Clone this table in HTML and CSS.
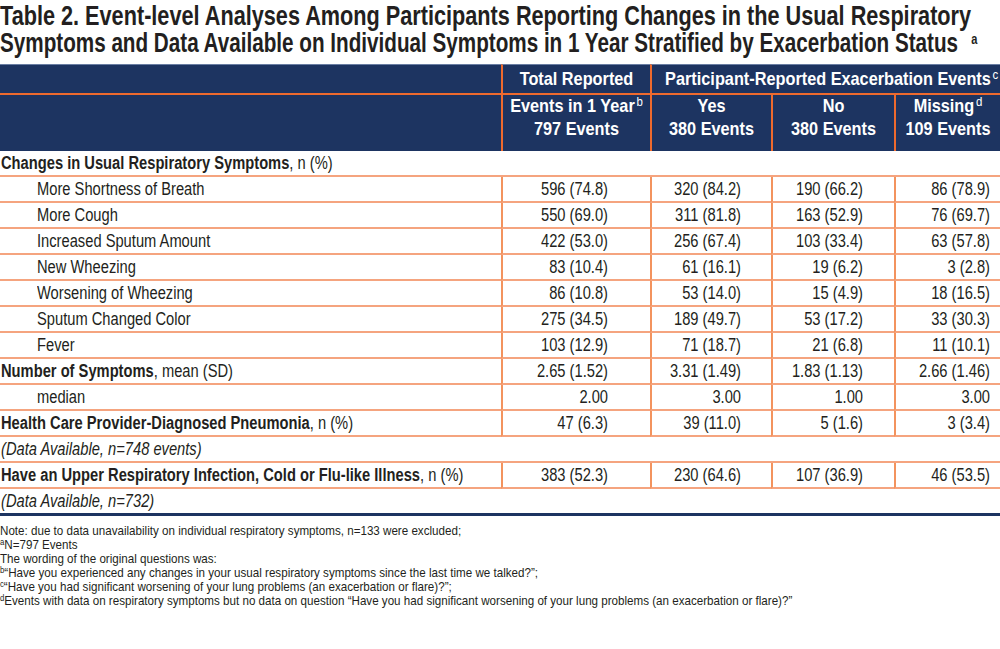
FILE: index.html
```html
<!DOCTYPE html>
<html lang="en">
<head>
<meta charset="utf-8">
<title>Table 2</title>
<link rel="stylesheet" href="styles.css">
</head>
<body>
<h1 class="title">
  <span class="tline">Table 2. Event-level Analyses Among Participants Reporting Changes in the Usual Respiratory</span>
  <span class="tline tline2">Symptoms and Data Available on Individual Symptoms in 1 Year Stratified by Exacerbation Status<sup class="tsup">a</sup></span>
</h1>
<table class="tbl">
  <colgroup>
    <col class="c1"><col class="c2"><col class="c3"><col class="c4"><col class="c5">
  </colgroup>
  <thead>
    <tr class="h1row">
      <th class="hblank"></th>
      <th class="hcell"><span class="hx">Total Reported</span></th>
      <th class="hcell hgrp" colspan="3"><span class="hx">Participant-Reported Exacerbation Events<sup class="hsup">c</sup></span></th>
    </tr>
    <tr class="h2row">
      <th class="hblank"></th>
      <th class="hcell"><span class="hx">Events in 1 Year<sup class="hsup">b</sup><br>797 Events</span></th>
      <th class="hcell"><span class="hx">Yes<br>380 Events</span></th>
      <th class="hcell"><span class="hx">No<br>380 Events</span></th>
      <th class="hcell"><span class="hx">Missing<sup class="hsup">d</sup><br>109 Events</span></th>
    </tr>
  </thead>
  <tbody>
    <tr><td class="lab"><span class="sx"><b>Changes in Usual Respiratory Symptoms</b>, n (%)</span></td><td></td><td></td><td></td><td></td></tr>
    <tr><td class="lab ind"><span class="sx">More Shortness of Breath</span></td><td class="d d2"><span class="sx">596 (74.8)</span></td><td class="d d3"><span class="sx">320 (84.2)</span></td><td class="d d4"><span class="sx">190 (66.2)</span></td><td class="d d5"><span class="sx">86 (78.9)</span></td></tr>
    <tr><td class="lab ind"><span class="sx">More Cough</span></td><td class="d d2"><span class="sx">550 (69.0)</span></td><td class="d d3"><span class="sx">311 (81.8)</span></td><td class="d d4"><span class="sx">163 (52.9)</span></td><td class="d d5"><span class="sx">76 (69.7)</span></td></tr>
    <tr><td class="lab ind"><span class="sx">Increased Sputum Amount</span></td><td class="d d2"><span class="sx">422 (53.0)</span></td><td class="d d3"><span class="sx">256 (67.4)</span></td><td class="d d4"><span class="sx">103 (33.4)</span></td><td class="d d5"><span class="sx">63 (57.8)</span></td></tr>
    <tr><td class="lab ind"><span class="sx">New Wheezing</span></td><td class="d d2"><span class="sx">83 (10.4)</span></td><td class="d d3"><span class="sx">61 (16.1)</span></td><td class="d d4"><span class="sx">19 (6.2)</span></td><td class="d d5"><span class="sx">3 (2.8)</span></td></tr>
    <tr><td class="lab ind"><span class="sx">Worsening of Wheezing</span></td><td class="d d2"><span class="sx">86 (10.8)</span></td><td class="d d3"><span class="sx">53 (14.0)</span></td><td class="d d4"><span class="sx">15 (4.9)</span></td><td class="d d5"><span class="sx">18 (16.5)</span></td></tr>
    <tr><td class="lab ind"><span class="sx">Sputum Changed Color</span></td><td class="d d2"><span class="sx">275 (34.5)</span></td><td class="d d3"><span class="sx">189 (49.7)</span></td><td class="d d4"><span class="sx">53 (17.2)</span></td><td class="d d5"><span class="sx">33 (30.3)</span></td></tr>
    <tr><td class="lab ind"><span class="sx">Fever</span></td><td class="d d2"><span class="sx">103 (12.9)</span></td><td class="d d3"><span class="sx">71 (18.7)</span></td><td class="d d4"><span class="sx">21 (6.8)</span></td><td class="d d5"><span class="sx">11 (10.1)</span></td></tr>
    <tr><td class="lab"><span class="sx"><b>Number of Symptoms</b>, mean (SD)</span></td><td class="d d2"><span class="sx">2.65 (1.52)</span></td><td class="d d3"><span class="sx">3.31 (1.49)</span></td><td class="d d4"><span class="sx">1.83 (1.13)</span></td><td class="d d5"><span class="sx">2.66 (1.46)</span></td></tr>
    <tr><td class="lab ind"><span class="sx">median</span></td><td class="d d2"><span class="sx">2.00</span></td><td class="d d3"><span class="sx">3.00</span></td><td class="d d4"><span class="sx">1.00</span></td><td class="d d5"><span class="sx">3.00</span></td></tr>
    <tr><td class="lab"><span class="sx"><b>Health Care Provider-Diagnosed Pneumonia</b>, n (%)</span></td><td class="d d2"><span class="sx">47 (6.3)</span></td><td class="d d3"><span class="sx">39 (11.0)</span></td><td class="d d4"><span class="sx">5 (1.6)</span></td><td class="d d5"><span class="sx">3 (3.4)</span></td></tr>
    <tr><td class="lab"><span class="sx"><i>(Data Available, n=748 events)</i></span></td><td></td><td></td><td></td><td></td></tr>
    <tr><td class="lab"><span class="sx"><b>Have an Upper Respiratory Infection, Cold or Flu-like Illness</b>, n (%)</span></td><td class="d d2"><span class="sx">383 (52.3)</span></td><td class="d d3"><span class="sx">230 (64.6)</span></td><td class="d d4"><span class="sx">107 (36.9)</span></td><td class="d d5"><span class="sx">46 (53.5)</span></td></tr>
    <tr class="last"><td class="lab"><span class="sx"><i>(Data Available, n=732)</i></span></td><td></td><td></td><td></td><td></td></tr>
  </tbody>
</table>
<div class="notes">
  <p>Note: due to data unavailability on individual respiratory symptoms, n=133 were excluded;</p>
  <p><sup>a</sup>N=797 Events</p>
  <p>The wording of the original questions was:</p>
  <p><sup>b</sup>“Have you experienced any changes in your usual respiratory symptoms since the last time we talked?”;</p>
  <p><sup>c</sup>“Have you had significant worsening of your lung problems (an exacerbation or flare)?”;</p>
  <p><sup>d</sup>Events with data on respiratory symptoms but no data on question “Have you had significant worsening of your lung problems (an exacerbation or flare)?”</p>
</div>
</body>
</html>
```
FILE: styles.css
```css
html, body {
  margin: 0;
  padding: 0;
  background: #ffffff;
}
body {
  font-family: "Liberation Sans", Arial, sans-serif;
  color: #231f20;
  width: 1000px;
  overflow: hidden;
}
.title {
  margin: 2px 0 8px 0;
  font-size: 28px;
  line-height: 27px;
  font-weight: bold;
  color: #231f20;
}
.tline {
  display: block;
  white-space: nowrap;
  transform: scaleX(0.774);
  transform-origin: left center;
}
.tline2 {
  transform: scaleX(0.738);
}
.tsup {
  font-size: 15px;
  line-height: 0;
  vertical-align: 8px;
  margin-left: 18px;
}
.tbl {
  width: 1000px;
  table-layout: fixed;
  border-collapse: separate;
  border-spacing: 0;
}
.c1 { width: 501px; }
.c2 { width: 149px; }
.c3 { width: 121px; }
.c4 { width: 123px; }
.c5 { width: 106px; }
thead th {
  background: #1d3461;
  color: #ffffff;
  font-weight: bold;
  font-size: 18.5px;
  padding: 0;
}
.h1row th {
  height: 28px;
  border-top: 1px solid #6a7ea3;
  border-bottom: 2px solid #ee6a2e;
  vertical-align: middle;
  line-height: 22px;
}
.h2row th {
  height: 56px;
  vertical-align: top;
  line-height: 23px;
}
.hcell {
  border-left: 2px solid #ee6a2e;
  text-align: center;
}
.hgrp {
  padding-right: 12px;
}
.hx {
  display: block;
  white-space: nowrap;
  margin: 0 -8px;
  transform: scaleX(0.88);
}
.h2row .hx {
  margin-top: -1px;
}
.hsup {
  font-weight: normal;
  font-size: 13px;
  line-height: 0;
  vertical-align: 6px;
  margin-left: 2px;
}
tbody td {
  height: 24px;
  padding: 0;
  font-size: 17.5px;
  line-height: 24px;
  border-bottom: 2px solid #f5a47f;
  white-space: nowrap;
}
tbody tr.last td {
  border-bottom: 3px solid #1d3461;
}
.sx {
  display: block;
  white-space: nowrap;
  transform: scaleX(0.84);
}
.lab .sx {
  transform-origin: left center;
}
.d .sx {
  transform-origin: right center;
  margin-left: -60px;
}
.lab {
  padding-left: 1px;
}
.lab.ind {
  padding-left: 37px;
}
.d {
  text-align: right;
  border-left: 2px solid #f3935e;
}
.d2 { padding-right: 42px; }
.d3 { padding-right: 30px; }
.d4 { padding-right: 31px; }
.d5 { padding-right: 10px; }
.notes {
  padding-top: 8px;
  font-size: 13.5px;
  line-height: 14px;
  color: #231f20;
  white-space: nowrap;
  transform: scaleX(0.86);
  transform-origin: left top;
}
.notes p {
  margin: 0;
}
.notes sup {
  font-size: 9px;
  line-height: 0;
  vertical-align: 4px;
}
```
